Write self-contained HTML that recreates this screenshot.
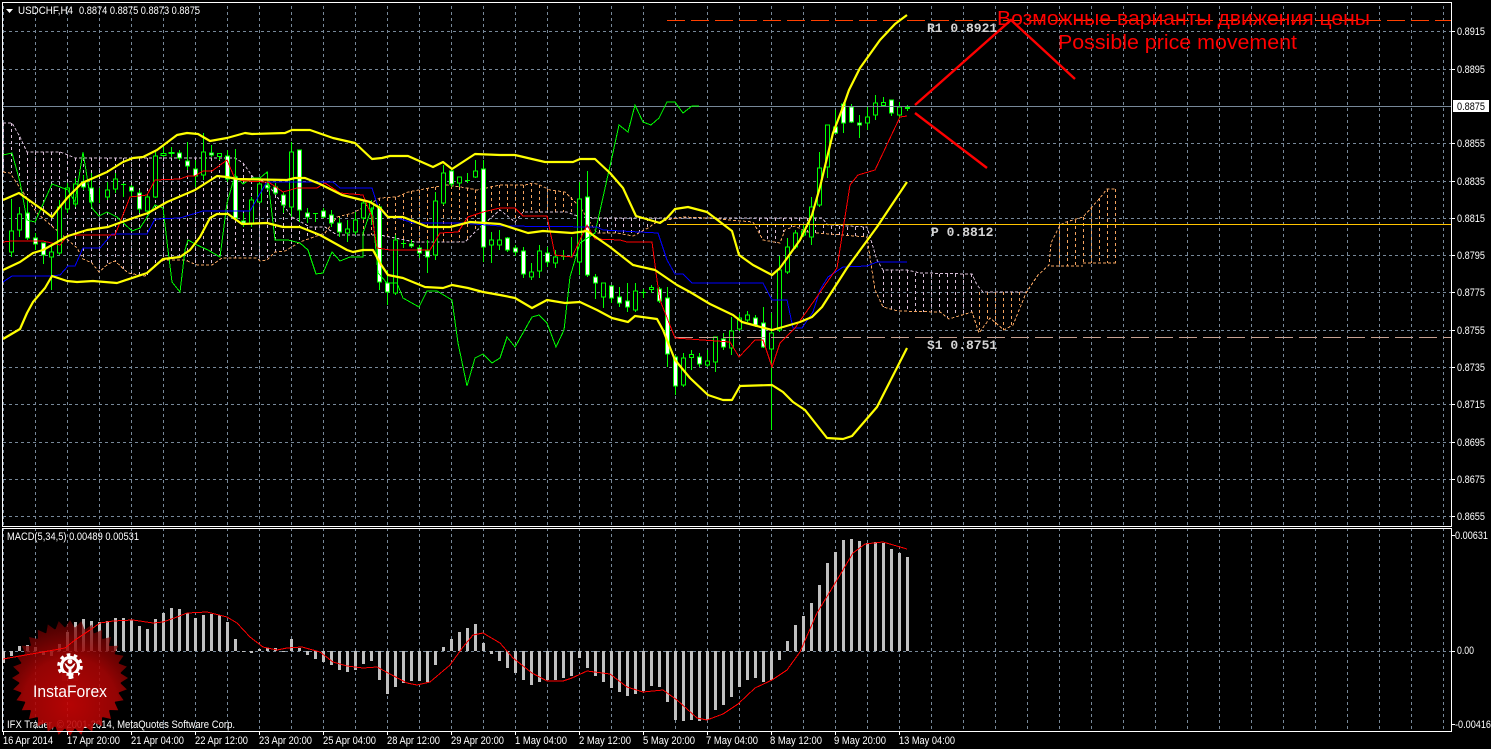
<!DOCTYPE html>
<html><head><meta charset="utf-8"><title>USDCHF,H4</title>
<style>
html,body{margin:0;padding:0;background:#000;width:1491px;height:749px;overflow:hidden}
svg{display:block}
text{font-family:"Liberation Sans",sans-serif}
.p{font-size:11px;fill:#fff}
.m{font-family:"Liberation Mono",monospace;font-size:13px;font-weight:bold;fill:#d4d4d4}
.r{font-size:20px;fill:#f00}
.t{shape-rendering:crispEdges}
</style></head><body>
<svg width="1491" height="749" viewBox="0 0 1491 749" xmlns="http://www.w3.org/2000/svg">
<defs>
<pattern id="vg" x="0" y="0" width="32" height="6" patternUnits="userSpaceOnUse"><rect x="3" y="0" width="1" height="3" fill="#778899"/></pattern>
<radialGradient id="lg" gradientUnits="userSpaceOnUse" cx="70" cy="705" r="95">
<stop offset="0" stop-color="#c80404" stop-opacity=".9"/>
<stop offset=".5" stop-color="#a80404" stop-opacity=".88"/>
<stop offset="1" stop-color="#5a0000" stop-opacity=".6"/>
</radialGradient>
<clipPath id="st">
<circle cx="70" cy="678" r="51"/>
<polygon points="70,620 75,628 75,728 70,736 65,728 65,628"/>
<polygon points="70,620 75,628 75,728 70,736 65,728 65,628" transform="rotate(11.25 70 678)"/>
<polygon points="70,620 75,628 75,728 70,736 65,728 65,628" transform="rotate(22.5 70 678)"/>
<polygon points="70,620 75,628 75,728 70,736 65,728 65,628" transform="rotate(33.75 70 678)"/>
<polygon points="70,620 75,628 75,728 70,736 65,728 65,628" transform="rotate(45 70 678)"/>
<polygon points="70,620 75,628 75,728 70,736 65,728 65,628" transform="rotate(56.25 70 678)"/>
<polygon points="70,620 75,628 75,728 70,736 65,728 65,628" transform="rotate(67.5 70 678)"/>
<polygon points="70,620 75,628 75,728 70,736 65,728 65,628" transform="rotate(78.75 70 678)"/>
<polygon points="70,620 75,628 75,728 70,736 65,728 65,628" transform="rotate(90 70 678)"/>
<polygon points="70,620 75,628 75,728 70,736 65,728 65,628" transform="rotate(101.25 70 678)"/>
<polygon points="70,620 75,628 75,728 70,736 65,728 65,628" transform="rotate(112.5 70 678)"/>
<polygon points="70,620 75,628 75,728 70,736 65,728 65,628" transform="rotate(123.75 70 678)"/>
<polygon points="70,620 75,628 75,728 70,736 65,728 65,628" transform="rotate(135 70 678)"/>
<polygon points="70,620 75,628 75,728 70,736 65,728 65,628" transform="rotate(146.25 70 678)"/>
<polygon points="70,620 75,628 75,728 70,736 65,728 65,628" transform="rotate(157.5 70 678)"/>
<polygon points="70,620 75,628 75,728 70,736 65,728 65,628" transform="rotate(168.75 70 678)"/>
</clipPath>
</defs>
<rect width="1491" height="749" fill="#000"/>

<!-- grid -->
<rect x="3" y="3" width="1448" height="523" fill="url(#vg)"/>
<rect x="3" y="529" width="1448" height="202" fill="url(#vg)"/>
<path d="M3 31.5H1451M3 69.5H1451M3 143.5H1451M3 181.5H1451M3 218.5H1451M3 255.5H1451M3 292.5H1451M3 330.5H1451M3 367.5H1451M3 404.5H1451M3 442.5H1451M3 479.5H1451M3 516.5H1451M3 651.5H1451" stroke="#778899" stroke-dasharray="3 3" fill="none" shape-rendering="crispEdges"/>

<!-- Ichimoku cloud hatching -->
<path fill="none" stroke="#d8bfd8" stroke-dasharray="3 3" shape-rendering="crispEdges" d="M3.5 123V172M11.5 123V173M19.5 137V180M27.5 152V195M35.5 152V212M43.5 152V218M51.5 152V226M59.5 152V232M67.5 155V238M75.5 158V247M83.5 158V259M91.5 158V263M99.5 158V272M107.5 158V264M115.5 158V261M123.5 158V270M131.5 158V274M139.5 158V275M147.5 158V275M155.5 158V263M163.5 158V260M171.5 158V260M179.5 158V260M187.5 158V261M195.5 158V264M203.5 158V265M211.5 158V265M219.5 158V260M227.5 158V258M235.5 160V258M243.5 163V258M251.5 175V258M259.5 183V260M267.5 183V260M275.5 195V252M283.5 205V251M291.5 217V247M299.5 225V242M307.5 227V238M315.5 227V235M599.5 218V233M607.5 218V233M615.5 218V233M623.5 218V234M631.5 218V236M639.5 218V232M647.5 218V228M655.5 218V223M759.5 218V235M767.5 218V241M775.5 218V243M783.5 218V232M791.5 218V227M799.5 218V228M807.5 218V232M815.5 218V233M823.5 225V234M831.5 226V235M839.5 226V235M847.5 227V235M855.5 227V236M863.5 227V237M883.5 270V307M891.5 270V310M899.5 270V312M907.5 270V312M915.5 273V312M923.5 274V312M931.5 274V312M939.5 274V312M947.5 274V318M955.5 274V316M963.5 274V314M971.5 274V312"/>
<path fill="none" stroke="#f4a460" stroke-dasharray="3 3" shape-rendering="crispEdges" d="M339.5 217V235M347.5 214V235M355.5 213V235M363.5 208V235M371.5 203V235M379.5 198V236M387.5 198V238M395.5 197V240M403.5 194V241M411.5 191V242M419.5 190V242M427.5 188V242M435.5 187V242M443.5 185V242M451.5 186V242M459.5 187V242M467.5 188V241M475.5 190V232M483.5 188V225M491.5 186V215M499.5 185V210M507.5 185V215M515.5 185V222M523.5 185V212M531.5 183V212M539.5 185V212M547.5 189V212M555.5 191V212M563.5 192V212M571.5 197V212M579.5 207V217M979.5 292V330M987.5 292V322M995.5 292V325M1003.5 292V330M1011.5 292V326M1019.5 292V305M1059.5 225V266M1067.5 222V266M1075.5 220V266M1083.5 217V263M1091.5 207V263M1099.5 198V263M1107.5 189V263M1115.5 189V263"/>
<!-- cloud edges -->
<polyline class="t" fill="none" stroke="#d8bfd8" stroke-dasharray="3 2" points="3,123 12,123 20,137 27,152 60,152 68,155 75,158 235,158 243,163 253,177 267,183 292,217 310,227 325,227 337,235 380,235 415,242 465,242 475,232 500,210 515,222 523,212 567,212 580,217 598,218 822,218 828,225 867,227 877,260 883,270 907,270 920,273 972,274 977,285 983,292 1026,292"/>
<polyline class="t" fill="none" stroke="#f4a460" stroke-dasharray="3 2" points="3,172 10,173 37,213 53,227 60,233 77,248 83,259 92,263 99,272 108,264 115,261 128,273 145,276 157,263 165,260 185,260 197,265 212,265 222,258 257,258 260,261 267,260 272,255 275,252 285,251 300,242 325,233 337,217 353,213 380,198 397,197 408,192 435,187 447,185 467,188 477,190 500,185 525,185 533,183 540,185 550,190 565,192 580,207 597,233 617,233 633,236 648,228 655,223 667,220 683,217 707,218 753,222 763,240 780,243 785,230 795,226 807,232 817,233 867,237 875,290 883,307 898,311 940,312 949,319 972,312 979,333 990,318 1004,330 1013,325 1026,293 1038,275 1049,265 1051,243 1060,225 1066,222 1083,217 1092,207 1100,198 1107,189 1116,189"/>
<path class="t" fill="none" stroke="#f4a460" stroke-dasharray="3 2" d="M1051 266H1083M1083 263H1116"/>

<!-- candle wicks -->
<path fill="none" stroke="#0f0" shape-rendering="crispEdges" d="M11.5 199V257M19.5 207V237M27.5 200V240M35.5 233V250M43.5 243V264M51.5 245V290M59.5 200V255M67.5 183V213M75.5 178V207M83.5 175V190M91.5 173V207M99.5 188V203M107.5 182V200M115.5 173V193M123.5 183V197M131.5 185V197M139.5 190V213M147.5 195V213M155.5 150V198M163.5 147V157M171.5 147V157M179.5 150V160M187.5 142V170M195.5 160V187M203.5 133V180M211.5 145V157M219.5 153V160M227.5 150V182M235.5 149V220M243.5 213V227M251.5 197V227M259.5 182V203M267.5 172V190M275.5 183V195M283.5 192V213M291.5 142V217M299.5 150V222M307.5 208V223M315.5 213V222M323.5 208V218M331.5 210V227M339.5 218V237M347.5 220V242M355.5 212V235M363.5 200V220M371.5 200V225M379.5 205V290M387.5 270V305M395.5 235V295M403.5 240V248M411.5 240V248M419.5 245V258M427.5 240V273M435.5 192V260M443.5 165V205M451.5 168V187M459.5 177V187M467.5 173V183M475.5 160V178M483.5 160V262M491.5 232V263M499.5 230V250M507.5 237V252M515.5 245V256M523.5 247V278M531.5 263V280M539.5 245V278M547.5 247V267M555.5 250V268M563.5 250V260M571.5 237V257M579.5 182V275M587.5 171V277M595.5 274V299M603.5 283V308M611.5 285V303M619.5 287V307M627.5 283V312M635.5 283V312M643.5 289V298M651.5 285V293M659.5 287V303M667.5 287V367M675.5 355V395M683.5 353V387M691.5 350V370M699.5 353V367M707.5 350V367M715.5 337V372M723.5 333V350M731.5 317V355M739.5 314V331M747.5 311V322M755.5 315V327M763.5 307V348M771.5 313V430M779.5 256V332M787.5 238V274M795.5 230V249M803.5 225V237M811.5 197V245M819.5 152V207M827.5 125V178M835.5 110V134M843.5 102V133M851.5 104V123M859.5 115V138M867.5 107V130M875.5 95V120M883.5 97V105M891.5 100V116M899.5 102V118M907.5 105V111"/>
<!-- bull bodies -->
<path fill="#000" stroke="#0f0" shape-rendering="crispEdges" d="M9.5 231h4V252h-4zM17.5 214h4V230h-4zM49.5 252h4V257h-4zM57.5 207h4V253h-4zM65.5 188h4V209h-4zM73.5 184h4V204h-4zM105.5 190h4V197h-4zM113.5 179h4V189h-4zM145.5 197h4V211h-4zM153.5 156h4V197h-4zM201.5 152h4V175h-4zM249.5 200h4V223h-4zM257.5 184h4V202h-4zM289.5 152h4V207h-4zM345.5 229h4V233h-4zM353.5 220h4V232h-4zM361.5 203h4V218h-4zM369.5 203h4V209h-4zM393.5 240h4V293h-4zM433.5 201h4V255h-4zM441.5 173h4V203h-4zM457.5 177h4V183h-4zM473.5 171h4V177h-4zM489.5 240h4V245h-4zM497.5 240h4V245h-4zM529.5 272h4V277h-4zM537.5 251h4V271h-4zM553.5 257h4V263h-4zM577.5 199h4V262h-4zM601.5 283h4V297h-4zM633.5 291h4V310h-4zM681.5 358h4V385h-4zM705.5 361h4V365h-4zM713.5 337h4V362h-4zM729.5 331h4V348h-4zM737.5 318h4V329h-4zM745.5 315h4V320h-4zM769.5 333h4V349h-4zM777.5 270h4V330h-4zM785.5 247h4V272h-4zM793.5 233h4V247h-4zM801.5 231h4V235h-4zM809.5 207h4V237h-4zM817.5 168h4V205h-4zM825.5 125h4V167h-4zM865.5 117h4V123h-4zM873.5 103h4V115h-4zM897.5 107h4V115h-4z"/>
<path fill="#000" stroke="#0f0" stroke-width="1" d="M161 153.500h5v2h-5zM169 152.500h5v1h-5zM217.500 153.500h4v3h-4zM313 213.500h5M297 199.500h5M121 184.500h5M401 243.500h5M465 180.500h5M641 292.500h5M561 256.500h5M689.500 354.500h4v3h-4zM649.500 287.500h4v2h-4zM881.500 102.500h4v3h-4zM905.500 107.500h4v1h-4z" shape-rendering="crispEdges"/>
<!-- bear bodies -->
<path fill="#fff" stroke="#0f0" shape-rendering="crispEdges" d="M25.500 213h4V238h-4zM33.500 238h4V244h-4zM41.500 243h4V255h-4zM81.500 182h4V187h-4zM89.500 188h4V202h-4zM129.500 187h4V191h-4zM137.500 193h4V209h-4zM177.500 153h4V158h-4zM185.500 161h4V166h-4zM193.500 169h4V176h-4zM209.500 153h4V155h-4zM225.500 156h4V179h-4zM233.500 177h4V218h-4zM241.500 221h4V223h-4zM265.500 185h4V188h-4zM273.500 187h4V193h-4zM281.500 195h4V205h-4zM297.500 150h4V210h-4zM305.500 213h4V217h-4zM321.500 211h4V217h-4zM329.500 215h4V223h-4zM337.500 223h4V232h-4zM377.500 207h4V282h-4zM385.500 283h4V292h-4zM409.500 244h4V246h-4zM417.500 248h4V253h-4zM425.500 251h4V257h-4zM449.500 171h4V184h-4zM481.500 169h4V247h-4zM505.500 238h4V250h-4zM513.500 248h4V252h-4zM521.500 251h4V274h-4zM545.500 253h4V262h-4zM585.500 197h4V275h-4zM593.500 277h4V283h-4zM609.500 286h4V298h-4zM617.500 297h4V303h-4zM625.500 301h4V307h-4zM657.500 289h4V301h-4zM665.500 298h4V354h-4zM673.500 357h4V386h-4zM697.500 357h4V364h-4zM721.500 339h4V347h-4zM753.500 318h4V325h-4zM761.500 323h4V347h-4zM833.500 127h4V133h-4zM841.500 104h4V123h-4zM849.500 107h4V122h-4zM857.500 123h4V125h-4zM889.500 100h4V113h-4z"/>

<!-- horizontal levels -->
<path d="M3 106.500H1451" stroke="#778899" shape-rendering="crispEdges"/>
<path d="M667 20.500H1451" stroke="#ff4000" stroke-dasharray="18 6" shape-rendering="crispEdges"/>
<path d="M667 224.500H1451" stroke="#ffc400" shape-rendering="crispEdges"/>
<path d="M675 337.500H1451" stroke="#c8a090" stroke-dasharray="18 6" shape-rendering="crispEdges"/>

<!-- chinkou green -->
<polyline class="t" fill="none" stroke="#0f0" points="3,155 12,153 20,182 27,220 35,222 52,184 68,190 75,202 83,152 92,208 99,216 107,212 117,217 132,231 140,228 155,205 163,208 168,250 172,282 180,292 185,250 188,240 197,245 208,250 220,257 227,203 235,175 243,184 252,178 260,178 267,172 275,240 288,240 300,243 308,250 316,274 323,273 332,252 340,261 350,257 363,257 363,233 372,207 378,273 387,283 397,283 403,298 419,307 427,291 437,291 452,300 458,343 467,386 475,358 483,354 492,363 500,358 507,337 515,347 532,317 539,315 547,323 556,347 564,330 570,277 580,243 595,233 612,157 619,125 628,132 635,105 643,122 651,125 659,118 667,102 675,102 683,113 692,106 699,106"/>
<!-- kijun blue -->
<polyline class="t" fill="none" stroke="#0000ff" points="3,282 12,276 50,276 60,275 68,266 75,266 83,248 100,248 112,234 147,234 155,219 180,218 203,211 250,211 265,185 267,182 333,182 340,188 372,188 378,207 387,217 395,217 413,223 460,223 500,226 597,227 603,230 658,233 667,260 675,274 683,274 692,283 763,283 772,300 787,300 793,328 802,328 813,312 820,290 828,277 843,267 867,266 877,262 907,262"/>
<!-- tenkan red -->
<polyline class="t" fill="none" stroke="#ff0000" points="3,242 12,241 43,241 60,245 68,235 115,235 130,197 147,195 155,180 180,179 188,176 195,176 203,171 212,171 227,160 235,179 245,181 267,182 270,183 283,192 297,188 317,188 325,183 340,193 363,195 372,217 377,248 390,250 417,250 430,250 440,233 458,232 468,217 483,212 500,208 515,208 523,216 547,216 555,255 572,257 587,225 595,239 620,240 627,242 652,242 657,280 660,300 675,338 730,342 739,357 755,340 763,340 772,367 780,343 795,328 837,268 850,185 858,175 875,170 900,117 907,116"/>
<!-- bollinger yellow -->
<g fill="none" stroke="#ffff00" stroke-width="2.2" stroke-linejoin="round">
<polyline points="3,200 19,193 33,203 43,210 52,217 59,208 68,197 82,183 107,172 123,162 133,158 143,157 157,150 177,135 187,133 198,134 210,141 227,138 245,133 252,134 285,133 292,130 310,130 333,138 355,143 372,159 382,158 390,156 408,156 433,167 443,162 452,169 475,154 500,155 515,155 532,159 545,162 573,162 580,159 595,159 610,173 623,188 636,216 660,223 667,218 675,209 688,207 707,212 732,231 739,255 753,265 772,275 780,268 800,240 812,215 820,187 833,133 843,107 849,90 860,68 880,40 895,24 907,15"/>
<polyline points="3,270 20,262 33,253 43,250 68,236 87,230 108,227 133,218 148,213 167,202 195,190 217,176 227,177 237,179 287,180 295,178 305,178 320,184 342,195 370,202 380,208 388,217 403,217 428,227 450,227 470,222 500,224 528,233 543,231 572,233 587,231 610,247 633,265 655,270 677,285 690,292 710,304 733,315 742,322 772,330 783,327 800,322 812,317 822,307 847,268 877,227 907,182"/>
<polyline points="3,339 20,329 27,313 33,302 45,288 52,276 67,281 77,282 93,281 117,283 147,273 163,259 180,257 190,250 200,237 210,218 217,214 228,214 242,224 267,223 283,227 300,227 320,235 347,250 353,252 363,250 373,250 380,263 388,275 403,278 425,287 443,288 452,285 468,288 483,292 500,295 515,298 532,308 547,300 565,303 580,302 597,310 612,318 628,322 635,316 657,319 663,330 675,360 690,378 708,395 723,400 732,400 740,386 772,385 783,392 793,402 805,410 827,438 843,439 852,436 877,407 907,348"/>
</g>
<!-- drawn red arrows -->
<g fill="none" stroke="#f00" stroke-width="2.4">
<polyline points="915,105 1011,20 1075,79"/>
<line x1="915" y1="113" x2="987" y2="168"/>
</g>
<!-- texts on chart -->
<text class="m" x="927" y="32">R1 0.8921</text>
<text class="m" x="931" y="236">P 0.8812</text>
<text class="m" x="927" y="349">S1 0.8751</text>
<text class="r" x="997" y="25" textLength="373" lengthAdjust="spacingAndGlyphs" style="font-family:'Liberation Sans','Noto Sans CJK SC',sans-serif">Возможные варианты движения цены</text>
<text class="r" x="1058" y="49" textLength="239" lengthAdjust="spacingAndGlyphs">Possible price movement</text>
<!-- header -->
<polygon points="6,9 13,9 9.500,13" fill="#fff"/>
<text class="p" x="18" y="14" textLength="55" lengthAdjust="spacingAndGlyphs">USDCHF,H4</text>
<text class="p" x="79" y="14" textLength="121" lengthAdjust="spacingAndGlyphs">0.8874 0.8875 0.8873 0.8875</text>

<!-- MACD histogram -->
<path fill="#c0c0c0" shape-rendering="crispEdges" d="M2 651h3v12h-3zM10 651h3v5h-3zM18 646h3v5h-3zM26 645h3v6h-3zM34 647h3v4h-3zM42 651h3v4h-3zM50 651h3v5h-3zM58 644h3v7h-3zM66 632h3v19h-3zM74 622h3v29h-3zM82 619h3v32h-3zM90 621h3v30h-3zM98 622h3v29h-3zM106 621h3v30h-3zM114 618h3v33h-3zM122 618h3v33h-3zM130 620h3v31h-3zM138 626h3v25h-3zM146 629h3v22h-3zM154 619h3v32h-3zM162 613h3v38h-3zM170 608h3v43h-3zM178 609h3v42h-3zM186 613h3v38h-3zM194 618h3v33h-3zM202 615h3v36h-3zM210 614h3v37h-3zM218 615h3v36h-3zM226 622h3v29h-3zM234 639h3v12h-3zM242 651h3v1h-3zM250 651h3v2h-3zM258 649h3v2h-3zM266 648h3v3h-3zM274 648h3v3h-3zM282 651h3v1h-3zM290 639h3v12h-3zM298 648h3v3h-3zM306 651h3v4h-3zM314 651h3v8h-3zM322 651h3v11h-3zM330 651h3v14h-3zM338 651h3v19h-3zM346 651h3v21h-3zM354 651h3v19h-3zM362 651h3v13h-3zM370 651h3v10h-3zM378 651h3v29h-3zM386 651h3v43h-3zM394 651h3v36h-3zM402 651h3v32h-3zM410 651h3v30h-3zM418 651h3v30h-3zM426 651h3v31h-3zM434 651h3v14h-3zM442 647h3v4h-3zM450 639h3v12h-3zM458 632h3v19h-3zM466 628h3v23h-3zM474 624h3v27h-3zM482 643h3v8h-3zM490 651h3v3h-3zM498 651h3v10h-3zM506 651h3v17h-3zM514 651h3v22h-3zM522 651h3v29h-3zM530 651h3v34h-3zM538 651h3v31h-3zM546 651h3v29h-3zM554 651h3v29h-3zM562 651h3v27h-3zM570 651h3v25h-3zM578 651h3v7h-3zM586 651h3v17h-3zM594 651h3v25h-3zM602 651h3v31h-3zM610 651h3v37h-3zM618 651h3v41h-3zM626 651h3v45h-3zM634 651h3v43h-3zM642 651h3v40h-3zM650 651h3v35h-3zM658 651h3v36h-3zM666 651h3v51h-3zM674 651h3v69h-3zM682 651h3v70h-3zM690 651h3v69h-3zM698 651h3v70h-3zM706 651h3v69h-3zM714 651h3v59h-3zM722 651h3v54h-3zM730 651h3v46h-3zM738 651h3v36h-3zM746 651h3v29h-3zM754 651h3v27h-3zM762 651h3v31h-3zM770 651h3v29h-3zM778 651h3v9h-3zM786 641h3v10h-3zM794 625h3v26h-3zM802 616h3v35h-3zM810 603h3v48h-3zM818 585h3v66h-3zM826 563h3v88h-3zM834 552h3v99h-3zM842 540h3v111h-3zM850 539h3v112h-3zM858 541h3v110h-3zM866 543h3v108h-3zM874 542h3v109h-3zM882 543h3v108h-3zM890 549h3v102h-3zM898 553h3v98h-3zM906 557h3v94h-3z"/>
<text class="p" x="7" y="728" textLength="228" lengthAdjust="spacingAndGlyphs">IFX Trader, © 2001-2014, MetaQuotes Software Corp.</text>

<!-- InstaForex logo -->
<rect x="0" y="610" width="140" height="130" fill="url(#lg)" clip-path="url(#st)"/>
<g fill="none" stroke="#fff">
<circle cx="70" cy="666" r="8.500" stroke-width="3.200"/>
<circle cx="70" cy="666" r="11.300" stroke-width="3" stroke-dasharray="3.550 3.550"/>
</g>
<rect x="62" y="673" width="4.500" height="8" fill="#a80606"/><rect x="73.500" y="673" width="4.500" height="8" fill="#a80606"/>
<circle cx="70" cy="661.500" r="2.400" fill="#fff"/>
<path d="M64.500 663Q66 668 68.500 669V679H71.500V669Q74 668 75.500 663L73.500 664Q72 666.500 70 666.500Q68 666.500 66.500 664z" fill="#fff"/>
<text x="33" y="697" font-size="16.500" fill="#fff" textLength="74" lengthAdjust="spacingAndGlyphs">InstaForex</text>

<!-- MACD signal -->
<polyline class="t" fill="none" stroke="#ff0000" points="3,659 20,656 43,652 65,648 75,640 90,630 100,623 113,621 133,620 153,623 163,622 177,617 187,613 207,612 227,617 237,623 250,637 263,647 277,650 287,648 302,647 320,652 333,662 347,666 363,668 377,667 390,674 407,683 417,685 430,682 450,665 463,647 473,635 483,633 500,643 513,658 532,673 547,681 563,681 572,678 587,671 610,674 627,687 643,692 663,690 677,700 697,718 707,720 723,714 738,704 755,688 772,680 787,670 800,652 817,613 837,580 853,553 865,544 883,542 907,549"/>
<text class="p" x="7" y="540" textLength="132" lengthAdjust="spacingAndGlyphs">MACD(5,34,5) 0.00489 0.00531</text>

<!-- frames -->
<rect x="2.500" y="2.500" width="1449" height="524" fill="none" stroke="#fff" shape-rendering="crispEdges"/>
<rect x="2.500" y="528.500" width="1449" height="203" fill="none" stroke="#fff" shape-rendering="crispEdges"/>
<!-- right ticks -->
<path stroke="#fff" shape-rendering="crispEdges" d="M1452 31.500h3M1452 69.500h3M1452 143.500h3M1452 181.500h3M1452 218.500h3M1452 255.500h3M1452 292.500h3M1452 330.500h3M1452 367.500h3M1452 404.500h3M1452 442.500h3M1452 479.500h3M1452 516.500h3M1452 535.500h3M1452 651.500h3M1452 724.500h3M3.500 732v3M131.500 732v3M195.500 732v3M259.500 732v3M323.500 732v3M387.500 732v3M451.500 732v3M515.500 732v3M579.500 732v3M643.500 732v3M707.500 732v3M771.500 732v3M835.500 732v3M899.500 732v3M67.500 732v3"/>
<!-- price axis -->
<g class="p">
<text class="p" x="1457" y="35" textLength="28" lengthAdjust="spacingAndGlyphs">0.8915</text>
<text class="p" x="1457" y="73" textLength="28" lengthAdjust="spacingAndGlyphs">0.8895</text>
<rect x="1453" y="100" width="36" height="12" fill="#fff"/>
<text x="1457" y="110" font-size="11" fill="#000" textLength="28" lengthAdjust="spacingAndGlyphs">0.8875</text>
<text class="p" x="1457" y="147" textLength="28" lengthAdjust="spacingAndGlyphs">0.8855</text>
<text class="p" x="1457" y="185" textLength="28" lengthAdjust="spacingAndGlyphs">0.8835</text>
<text class="p" x="1457" y="222" textLength="28" lengthAdjust="spacingAndGlyphs">0.8815</text>
<text class="p" x="1457" y="259" textLength="28" lengthAdjust="spacingAndGlyphs">0.8795</text>
<text class="p" x="1457" y="296" textLength="28" lengthAdjust="spacingAndGlyphs">0.8775</text>
<text class="p" x="1457" y="334" textLength="28" lengthAdjust="spacingAndGlyphs">0.8755</text>
<text class="p" x="1457" y="371" textLength="28" lengthAdjust="spacingAndGlyphs">0.8735</text>
<text class="p" x="1457" y="408" textLength="28" lengthAdjust="spacingAndGlyphs">0.8715</text>
<text class="p" x="1457" y="446" textLength="28" lengthAdjust="spacingAndGlyphs">0.8695</text>
<text class="p" x="1457" y="483" textLength="28" lengthAdjust="spacingAndGlyphs">0.8675</text>
<text class="p" x="1457" y="520" textLength="28" lengthAdjust="spacingAndGlyphs">0.8655</text>
<text class="p" x="1455" y="539" textLength="33" lengthAdjust="spacingAndGlyphs">0.00631</text>
<text class="p" x="1457" y="654" textLength="17" lengthAdjust="spacingAndGlyphs">0.00</text>
<text class="p" x="1455" y="728" textLength="36" lengthAdjust="spacingAndGlyphs">-0.00416</text>
</g>
<!-- time axis -->
<text class="p" x="3" y="744" textLength="50" lengthAdjust="spacingAndGlyphs">16 Apr 2014</text>
<text class="p" x="67" y="744" textLength="53" lengthAdjust="spacingAndGlyphs">17 Apr 20:00</text>
<text class="p" x="131" y="744" textLength="53" lengthAdjust="spacingAndGlyphs">21 Apr 04:00</text>
<text class="p" x="195" y="744" textLength="53" lengthAdjust="spacingAndGlyphs">22 Apr 12:00</text>
<text class="p" x="259" y="744" textLength="53" lengthAdjust="spacingAndGlyphs">23 Apr 20:00</text>
<text class="p" x="323" y="744" textLength="53" lengthAdjust="spacingAndGlyphs">25 Apr 04:00</text>
<text class="p" x="387" y="744" textLength="53" lengthAdjust="spacingAndGlyphs">28 Apr 12:00</text>
<text class="p" x="451" y="744" textLength="53" lengthAdjust="spacingAndGlyphs">29 Apr 20:00</text>
<text class="p" x="515" y="744" textLength="52" lengthAdjust="spacingAndGlyphs">1 May 04:00</text>
<text class="p" x="579" y="744" textLength="52" lengthAdjust="spacingAndGlyphs">2 May 12:00</text>
<text class="p" x="643" y="744" textLength="52" lengthAdjust="spacingAndGlyphs">5 May 20:00</text>
<text class="p" x="706" y="744" textLength="52" lengthAdjust="spacingAndGlyphs">7 May 04:00</text>
<text class="p" x="770" y="744" textLength="52" lengthAdjust="spacingAndGlyphs">8 May 12:00</text>
<text class="p" x="834" y="744" textLength="52" lengthAdjust="spacingAndGlyphs">9 May 20:00</text>
<text class="p" x="899" y="744" textLength="56" lengthAdjust="spacingAndGlyphs">13 May 04:00</text>
</svg>
</body></html>
